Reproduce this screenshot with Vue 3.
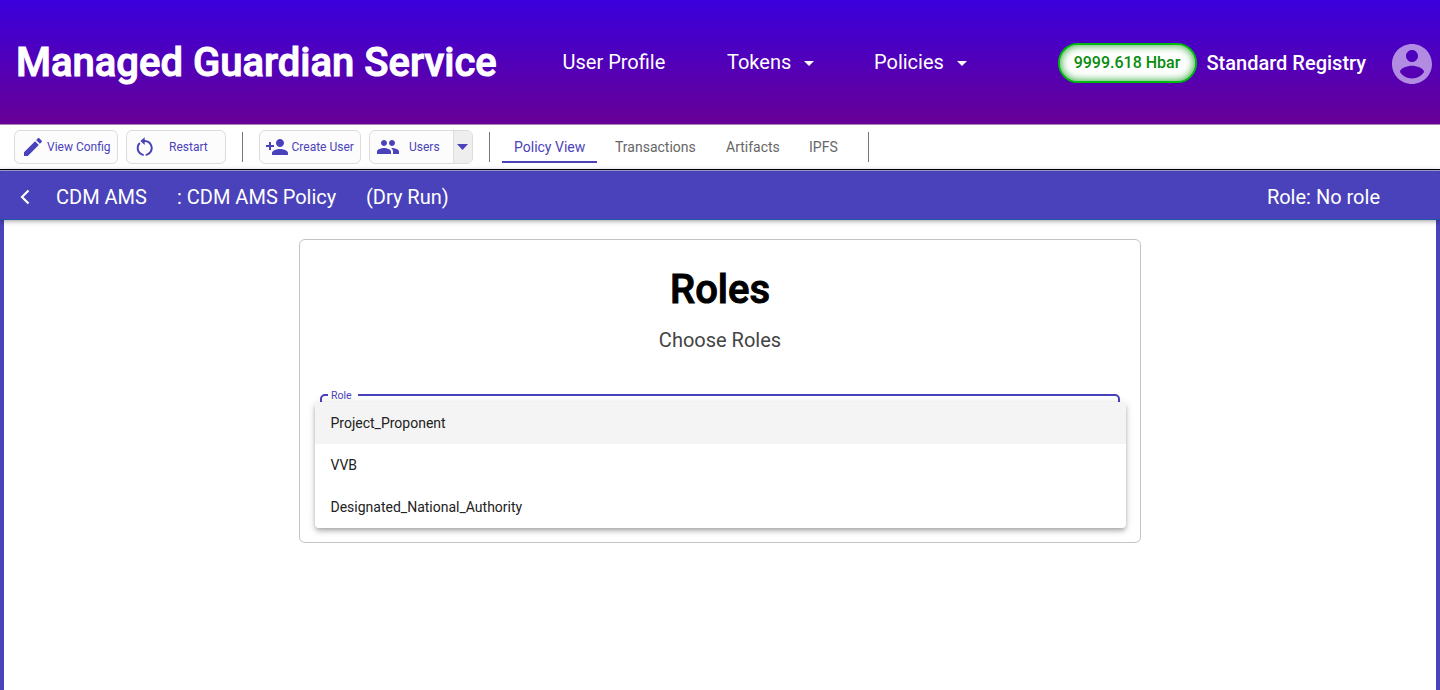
<script setup>
const menu = [
  { label: 'User Profile', cls: 'profile' },
  { label: 'Tokens', cls: 'tokens', drop: true },
  { label: 'Policies', cls: 'policies', drop: true },
]
const tabs = [
  { label: 'Policy View', cls: 'active' },
  { label: 'Transactions', cls: 'transactions' },
  { label: 'Artifacts', cls: 'artifacts' },
  { label: 'IPFS', cls: 'ipfs' },
]
const roles = ['Project_Proponent', 'VVB', 'Designated_National_Authority']
</script>

<template>
  <div class="page">
    <header class="header">
      <h1 class="brand"><span>Managed Guardian Service</span></h1>
      <nav class="menu">
        <a v-for="m in menu" :key="m.label" :class="m.cls">
          <span>{{ m.label }}</span>
          <svg v-if="m.drop" class="caret" viewBox="0 0 10 5"><path d="M0 0h10L5 5z" /></svg>
        </a>
      </nav>
      <div class="account">
        <div class="balance"><span>9999.618 Hbar</span></div>
        <div class="user"><span>Standard Registry</span></div>
        <svg class="avatar" viewBox="2 2 20 20"><path d="M12 2C6.48 2 2 6.48 2 12s4.48 10 10 10 10-4.480 10-10S17.520 2 12 2zm0 3c1.660 0 3 1.340 3 3s-1.340 3-3 3-3-1.340-3-3 1.340-3 3-3zm0 14.200c-2.500 0-4.710-1.280-6-3.220.030-1.990 4-3.080 6-3.080 1.990 0 5.970 1.090 6 3.080-1.290 1.940-3.500 3.220-6 3.220z" /></svg>
      </div>
    </header>

    <div class="toolbar">
      <button class="btn config">
        <svg viewBox="0 0 24 24"><path d="M3 17.250V21h3.750L17.810 9.940l-3.750-3.750L3 17.250zM20.710 7.040a1 1 0 0 0 0-1.410l-2.340-2.340a1 1 0 0 0-1.410 0l-1.830 1.830 3.750 3.750 1.830-1.830z" /></svg>
        <span>View Config</span>
      </button>
      <button class="btn restart">
        <svg viewBox="0.300 0 24 24"><path d="M12 5V2.300L7.700 6l4.300 4V7c3.310 0 6 2.690 6 6 0 2.970-2.170 5.430-5 5.910v2.020c3.950-.490 7-3.850 7-7.930 0-4.420-3.580-8-8-8zM6 13c0-1.650.670-3.150 1.760-4.240L6.340 7.340A8.010 8.010 0 0 0 4 13c0 4.080 3.050 7.440 7 7.930v-2.020C8.170 18.430 6 15.970 6 13z" /></svg>
        <span>Restart</span>
      </button>
      <i class="rule first"></i>
      <button class="btn create">
        <svg viewBox="0 0 24 24"><path d="M15 12c2.210 0 4-1.790 4-4s-1.790-4-4-4-4 1.790-4 4 1.790 4 4 4zm-9-2V7H4v3H1v2h3v3h2v-3h3v-2H6zm9 4c-2.670 0-8 1.340-8 4v2h16v-2c0-2.660-5.330-4-8-4z" /></svg>
        <span>Create User</span>
      </button>
      <button class="btn users">
        <svg viewBox="0 0 24 24"><path d="M16 11c1.660 0 2.990-1.340 2.990-3S17.660 5 16 5s-3 1.340-3 3 1.340 3 3 3zm-8 0c1.660 0 2.990-1.340 2.990-3S9.660 5 8 5 5 6.340 5 8s1.340 3 3 3zm0 2c-2.330 0-7 1.170-7 3.500V19h14v-2.500c0-2.330-4.670-3.500-7-3.500zm8 0c-.290 0-.620.020-.970.050 1.160.840 1.970 1.970 1.970 3.450V19h6v-2.500c0-2.330-4.670-3.500-7-3.500z" /></svg>
        <span>Users</span>
        <div class="split"><svg viewBox="0 0 11 6"><path d="M0 0h11L5.500 6z" /></svg></div>
      </button>
      <i class="rule second"></i>
      <nav class="tabs">
        <a v-for="t in tabs" :key="t.label" :class="t.cls"><span>{{ t.label }}</span></a>
      </nav>
      <i class="rule third"></i>
    </div>

    <div class="bar">
      <svg class="back" viewBox="0 0 10 16"><path d="M8.500 1.500L2 8l6.500 6.500" /></svg>
      <span class="name">CDM AMS</span>
      <span class="policy">: CDM AMS Policy</span>
      <span class="status">(Dry Run)</span>
      <span class="role">Role: No role</span>
    </div>

    <main class="content">
      <section class="card">
        <h2><span>Roles</span></h2>
        <p><span>Choose Roles</span></p>
        <fieldset class="field">
          <legend><span>Role</span></legend>
        </fieldset>
        <ul class="options">
          <li v-for="(r, i) in roles" :key="r" :class="{ hover: i === 0 }"><span>{{ r }}</span></li>
        </ul>
      </section>
    </main>
  </div>
</template>

<style>
body { margin: 0; overflow: hidden; }
</style>

<style scoped>
* { box-sizing: border-box; }
.page { width: 1440px; height: 690px; display: flex; flex-direction: column; overflow: hidden; background: #fff; font-family: Roboto, sans-serif; white-space: nowrap; }
svg { display: block; flex: none; fill: currentColor; }
.header { height: 125px; flex: none; display: flex; align-items: center; background: linear-gradient(#3a00dc, #680096); border-bottom: 1px solid #a984b8; color: #fff; }
.brand { margin: 2px 0 0 16px; width: 546.500px; font-size: 40px; line-height: 50px; font-weight: 500; -webkit-text-stroke: 1px currentColor; }
.menu { display: flex; font-size: 20px; line-height: 24px; }
.menu a { display: flex; align-items: center; }
.profile { width: 164.500px; }
.tokens { width: 147px; }
.policies { width: 185.500px; }
.caret { width: 10px; height: 5px; margin: 3px 0 0 13px; }
.account { display: flex; align-items: center; padding-top: 2px; }
.balance { width: 139px; height: 40px; margin-left: -1.500px; border: 2px solid #00b90f; border-radius: 20px; background: #fff; box-shadow: inset 0 0 8px #1a9e24; color: #078c0c; font-size: 16px; font-weight: 500; display: flex; align-items: center; justify-content: center; padding: 0 1px 2px 0; }
.user { margin-left: 9.500px; width: 185.500px; font-size: 20px; font-weight: 500; line-height: 24px; }
.avatar { width: 40px; height: 40px; margin-top: 2px; color: #b28ce3; }

.toolbar { height: 45px; flex: none; display: flex; align-items: center; border-bottom: 1px solid #000; padding-left: 14px; }
.btn { height: 34px; margin: 0 8px 0 0; padding: 0; border: 1px solid #dcdcdc; border-radius: 6px; background: #fcfcfc; color: #4a42ba; font: 400 12px/16px Roboto, sans-serif; display: flex; align-items: center; overflow: hidden; flex: none; }
.config { width: 104px; padding-left: 6px; }
.config svg { width: 24px; height: 24px; margin-right: 2px; }
.restart { width: 100px; padding-left: 6px; }
.restart svg { width: 24px; height: 24px; margin-right: 12px; }
.create { width: 102px; padding-left: 5px; }
.create svg { width: 24px; height: 24px; margin-right: 2.500px; }
.users { width: 104px; padding-left: 6px; }
.users svg { width: 24px; height: 24px; }
.users span { margin-left: 9px; }
.users .split { width: 19px; height: 32px; margin-left: auto; padding-right: 2px; border-left: 1px solid #dcdcdc; background: #eee; display: flex; align-items: center; justify-content: center; }
.users .split svg { width: 11px; height: 6px; }
.rule { width: 1px; height: 30px; background: #777; flex: none; }
.first { margin: 0 16px 0 8px; }
.second { margin: 0 12px 0 8px; }
.tabs { display: flex; font-size: 14px; line-height: 16px; color: #666; height: 32px; }
.tabs a { height: 32px; padding-top: 8px; }
.tabs .active { width: 95px; padding-left: 12px; margin-right: 18px; color: #4a42ba; border-bottom: 2px solid #4a42ba; }
.transactions { width: 111px; }
.artifacts { width: 83px; }
.ipfs { width: 59px; }

.bar { height: 50px; flex: none; display: flex; align-items: center; position: relative; background: #4a42ba; border-top: 1px solid #9995bd; border-bottom: 1px solid #1f57a8; color: #fff; font-size: 20px; line-height: 24px; padding: 3px 60px 0 20px; box-shadow: 0 1px 5px rgba(0, 0, 0, 0.4); }
.back { width: 10px; height: 16px; fill: none; stroke: #fff; stroke-width: 2.2; margin-right: 26px; }
.name { width: 121px; }
.policy { width: 189px; }
.role { margin-left: auto; }

.content { flex: 1; border: solid #4a42ba; border-width: 0 4px; padding-top: 19px; display: flex; justify-content: center; align-items: flex-start; }
.card { width: 842px; height: 304px; position: relative; border: 1px solid #c4c4c4; border-radius: 6px; text-align: center; }
h2 { margin: 25px 0 0; font-size: 40px; line-height: 50px; font-weight: 500; -webkit-text-stroke: 1px currentColor; color: #000; }
p { margin: 13px 0 0; font-size: 20px; line-height: 24px; color: #444; }
.field { margin: 36px 20px 0; height: 54px; border: 2px solid #4a42ba; border-radius: 5px; padding: 0 0 0 6px; text-align: left; }
.field legend { padding: 1px 6px 0 3px; color: #4a42ba; font-size: 10.500px; line-height: 13px; }
.options { position: absolute; left: 15px; top: 162px; width: 811px; margin: 0; padding: 0; list-style: none; text-align: left; background: #fff; border-radius: 4px; box-shadow: 0 2px 4px -1px rgba(0, 0, 0, 0.2), 0 4px 5px rgba(0, 0, 0, 0.14), 0 1px 10px rgba(0, 0, 0, 0.12); overflow: hidden; }
.options li { height: 42px; line-height: 42px; padding-left: 15.500px; font-size: 14px; color: #212121; }
.options .hover { background: #f4f4f4; }
</style>
